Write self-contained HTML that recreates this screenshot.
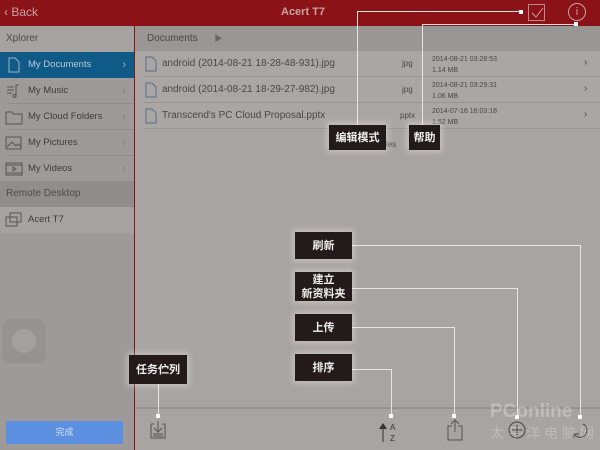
<!DOCTYPE html>
<html><head><meta charset="utf-8"><style>
*{margin:0;padding:0;box-sizing:border-box}
body{width:600px;height:450px;overflow:hidden;position:relative;background:#a8a4a1;font-family:"Liberation Sans","Noto Sans CJK SC",sans-serif}
.a{position:absolute}
.hdr{left:0;top:0;width:600px;height:26px;background:#8b1318;color:#c9a2a2;font-size:12px}
.side{left:0;top:26px;width:134px;height:424px;background:#9e9a99}
.row{position:absolute;left:0;width:134px;height:26px;font-size:9.5px;color:#3e3b3a;line-height:26px;padding-left:28px}
.row .ch{position:absolute;right:8px;top:0;color:#7f7b7a;font-size:11px}
.row svg{position:absolute;left:5px;top:5px}
.sep{position:absolute;left:8px;right:0;bottom:0;height:1px;background:#8f8b8a}
.box{position:absolute;background:#231b19;color:#eee;font-size:11px;font-weight:bold;text-align:center;box-shadow:0 0 6px 2px rgba(255,255,255,.35);line-height:14px;display:flex;align-items:center;justify-content:center}
.ln{position:absolute;background:#e8e6e4}
.dot{position:absolute;width:4px;height:4px;background:#fff}
.frow{position:absolute;left:144px;width:456px;height:26px;border-bottom:1px solid #979391;font-size:10px;color:#4a4644}
.frow svg{position:absolute;left:1px;top:5px}
</style></head><body>
<div class="a hdr"><span class="a" style="left:4px;top:5px;font-size:12px">&#x2039; Back</span><span class="a" style="left:281px;top:6px;font-weight:bold;font-size:11px">Acert T7</span>
<div class="a" style="left:528px;top:4px;width:17px;height:17px;border:1px solid #b58b8b"></div>
<svg class="a" style="left:528px;top:4px" width="18" height="18"><path d="M4 9l4 4 7-9" stroke="#c9a2a2" fill="none"/></svg>
<div class="a" style="left:568px;top:3px;width:18px;height:18px;border:1px solid #c9a2a2;border-radius:50%;text-align:center;font-size:11px;line-height:16px">i</div>
</div>
<div class="a side">
<div class="row" style="top:0;background:#a6a2a1;padding-left:6px;color:#4f4b4a;font-size:10px">Xplorer</div>
<div class="row" style="top:26px;background:#0f5a86;color:#b9c9d6"><svg width="16" height="16" stroke="#9fb4c3" fill="none"><path d="M4 1h6l4 4v10H4z"/></svg>My Documents<span class="ch" style="color:#9fb4c3">&#x203A;</span></div>
<div class="row" style="top:52px"><svg width="16" height="16" stroke="#555" fill="none"><path d="M2 4h7M2 7h7M2 10h5M11 2v11M11 2h3"/><circle cx="9.5" cy="13" r="1.5"/></svg>My Music<span class="ch">&#x203A;</span><div class="sep"></div></div>
<div class="row" style="top:78px"><svg width="18" height="16" stroke="#555" fill="none"><path d="M1 3h6l1 2h9v10H1z"/></svg>My Cloud Folders<span class="ch">&#x203A;</span><div class="sep"></div></div>
<div class="row" style="top:104px"><svg width="18" height="16" stroke="#555" fill="none"><rect x="1" y="2" width="15" height="12"/><path d="M2 12l5-5 4 4 2-2 3 3"/></svg>My Pictures<span class="ch">&#x203A;</span><div class="sep"></div></div>
<div class="row" style="top:130px"><svg width="18" height="16" stroke="#555" fill="none"><rect x="1" y="2" width="16" height="12"/><path d="M1 4h16M1 12h16M8 6l3 2-3 2z"/></svg>My Videos<span class="ch">&#x203A;</span></div>
<div class="row" style="top:155px;background:#918d8c;padding-left:6px;color:#4f4b4a;font-size:10px">Remote Desktop</div>
<div class="row" style="top:181px;background:#a6a2a1"><svg width="18" height="16" stroke="#555" fill="none"><path d="M5 1h11v9H5zM1 5h11v9H1z"/></svg>Acert T7</div>
<div class="a" style="left:2px;top:293px;width:44px;height:44px;border-radius:9px;background:#969291"></div>
<div class="a" style="left:12px;top:303px;width:24px;height:24px;border-radius:50%;background:#a4a09f"></div>
<div class="a" style="left:6px;top:395px;width:117px;height:23px;background:#5b8fe0;color:#d8e4f6;font-size:9px;text-align:center;line-height:23px">完成</div>
</div>
<div class="a" style="left:134px;top:26px;width:1px;height:424px;background:#8b1318"></div>
<div class="a" style="left:135px;top:26px;width:465px;height:25px;background:#9a9696;font-size:10px;color:#4a4644;line-height:25px;padding-left:12px">Documents <span style="margin-left:14px;font-size:8px;color:#666">&#9654;</span></div>
<div class="a" style="left:135px;top:51px;width:465px;height:78px;background:#aaa6a3"></div>
<div class="frow" style="top:51px"><svg width="12" height="16" stroke="#56708a" fill="none"><path d="M1 1h6l4 4v10H1z"/></svg><span class="a" style="left:18px;top:7px">android (2014-08-21 18-28-48-931).jpg</span><span class="a" style="left:258px;top:8px;font-size:8px">jpg</span><span class="a" style="left:288px;top:3px;font-size:7px;line-height:11px">2014-08-21 03:28:53<br>1.14 MB</span><span class="a" style="left:440px;top:6px">&#x203A;</span></div>
<div class="frow" style="top:77px"><svg width="12" height="16" stroke="#56708a" fill="none"><path d="M1 1h6l4 4v10H1z"/></svg><span class="a" style="left:18px;top:7px">android (2014-08-21 18-29-27-982).jpg</span><span class="a" style="left:258px;top:8px;font-size:8px">jpg</span><span class="a" style="left:288px;top:3px;font-size:7px;line-height:11px">2014-08-21 03:29:31<br>1.06 MB</span><span class="a" style="left:440px;top:6px">&#x203A;</span></div>
<div class="frow" style="top:103px"><svg width="12" height="16" stroke="#56708a" fill="none"><path d="M1 1h6l4 4v10H1z"/></svg><span class="a" style="left:18px;top:7px">Transcend's PC Cloud Proposal.pptx</span><span class="a" style="left:256px;top:8px;font-size:8px">pptx</span><span class="a" style="left:288px;top:3px;font-size:7px;line-height:11px">2014-07-16 16:03:18<br>1.52 MB</span><span class="a" style="left:440px;top:6px">&#x203A;</span></div>
<span class="a" style="left:386px;top:140px;font-size:8px;color:#4a4644">les</span>
<div class="a" style="left:135px;top:407px;width:465px;height:2px;background:#95918f"></div>
<div class="ln" style="left:357px;top:11px;width:1px;height:114px"></div>
<div class="ln" style="left:357px;top:11px;width:163px;height:1px"></div><div class="dot" style="left:519px;top:10px"></div>
<div class="ln" style="left:422px;top:24px;width:1px;height:101px"></div>
<div class="ln" style="left:422px;top:24px;width:154px;height:1px"></div><div class="dot" style="left:574px;top:22px"></div>
<div class="ln" style="left:352px;top:245px;width:228px;height:1px"></div><div class="ln" style="left:580px;top:245px;width:1px;height:172px"></div><div class="dot" style="left:578px;top:415px"></div>
<div class="ln" style="left:352px;top:288px;width:165px;height:1px"></div><div class="ln" style="left:517px;top:288px;width:1px;height:129px"></div><div class="dot" style="left:515px;top:415px"></div>
<div class="ln" style="left:352px;top:327px;width:102px;height:1px"></div><div class="ln" style="left:454px;top:327px;width:1px;height:88px"></div><div class="dot" style="left:452px;top:414px"></div>
<div class="ln" style="left:352px;top:369px;width:39px;height:1px"></div><div class="ln" style="left:391px;top:369px;width:1px;height:46px"></div><div class="dot" style="left:389px;top:414px"></div>
<div class="ln" style="left:158px;top:384px;width:1px;height:31px"></div><div class="dot" style="left:156px;top:414px"></div>
<div class="box" style="left:329px;top:125px;width:57px;height:25px">编辑模式</div>
<div class="box" style="left:409px;top:125px;width:31px;height:25px">帮助</div>
<div class="box" style="left:295px;top:232px;width:57px;height:27px">刷新</div>
<div class="box" style="left:295px;top:272px;width:57px;height:29px">建立<br>新资料夹</div>
<div class="box" style="left:295px;top:314px;width:57px;height:27px">上传</div>
<div class="box" style="left:295px;top:354px;width:57px;height:27px">排序</div>
<div class="box" style="left:129px;top:355px;width:58px;height:29px">任务伫列</div>
<svg class="a" style="left:148px;top:418px" width="20" height="24" stroke="#555" fill="none"><path d="M3 6h3M14 6h3M3 6v14h14V6M10 3v11M6 10l4 4 4-4M5 16h10M5 18h10"/></svg>
<svg class="a" style="left:378px;top:420px" width="24" height="24"><path d="M5 4v18" stroke="#333"/><path d="M1 9l4-6 4 6z" fill="#333"/><text x="12" y="10" font-size="8" fill="#333" font-family="Liberation Sans">A</text><text x="12" y="21" font-size="8" fill="#333" font-family="Liberation Sans">Z</text></svg>
<svg class="a" style="left:445px;top:418px" width="20" height="24" stroke="#555" fill="none"><path d="M7 8H3v14h14V8h-4M10 2v12M6 6l4-4 4 4"/></svg>
<svg class="a" style="left:506px;top:419px" width="22" height="22" stroke="#444" fill="none"><circle cx="11" cy="11" r="8"/><path d="M11 6v10M6 11h10"/></svg>
<svg class="a" style="left:570px;top:420px" width="20" height="22" stroke="#444" fill="none"><path d="M13 4a7 7 0 1 1-9 10M4 14l0 5M4 14l5 0"/></svg>
<div class="a" style="left:490px;top:401px;font-size:19px;color:rgba(255,255,255,.28);font-weight:bold">PConline</div>
<div class="a" style="left:490px;top:423px;font-size:14px;color:rgba(255,255,255,.25);letter-spacing:4px">太平洋电脑网</div>
</body></html>
